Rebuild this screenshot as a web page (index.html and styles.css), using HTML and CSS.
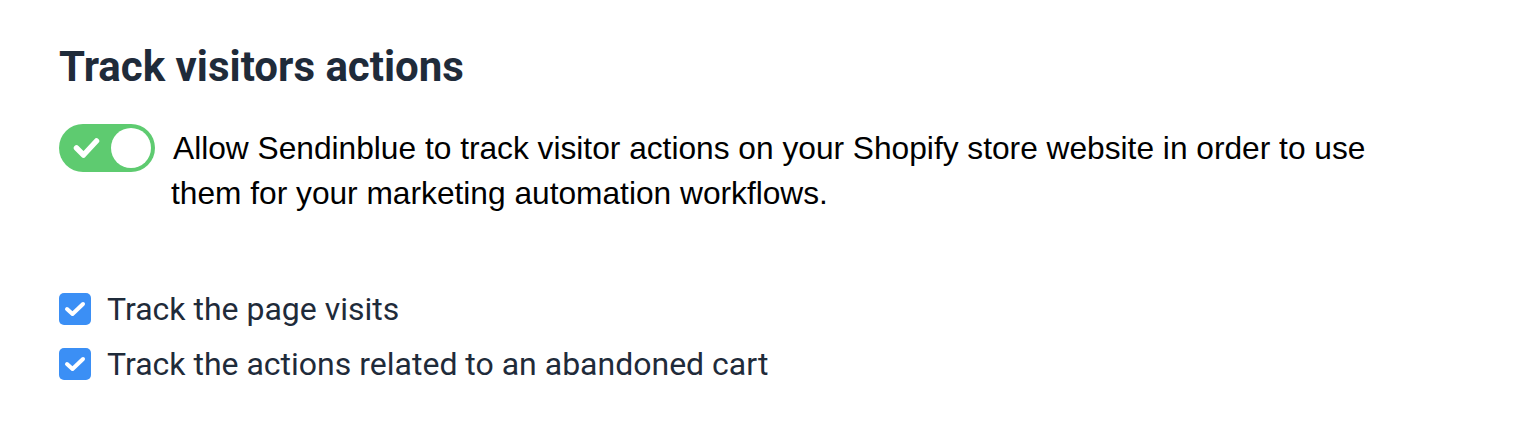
FILE: index.html
```html
<!doctype html>
<html>
<head>
<meta charset="utf-8">
<title>Track visitors actions</title>
<link rel="stylesheet" href="styles.css">
</head>
<body>
<div class="panel">
	<h2 class="title">Track visitors actions</h2>
	<div class="toggle-row">
		<span class="toggle">
			<svg class="toggle-check" width="27" height="22" viewBox="0 0 27 22"><path d="M3.5 11 L10.5 18 L23.5 4" fill="none" stroke="#fff" stroke-width="5.5" stroke-linecap="round" stroke-linejoin="round"/></svg>
			<span class="knob"></span>
		</span>
		<p class="toggle-text">Allow Sendinblue to track visitor actions on your Shopify store website in order to use them for your marketing automation workflows.</p>
	</div>
	<ul class="checks">
		<li><span class="box"><svg width="22" height="18" viewBox="0 0 22 18"><path d="M3 9 L8.5 14 L19 4" fill="none" stroke="#fff" stroke-width="4" stroke-linecap="round" stroke-linejoin="round"/></svg></span>Track the page visits</li>
		<li><span class="box"><svg width="22" height="18" viewBox="0 0 22 18"><path d="M3 9 L8.5 14 L19 4" fill="none" stroke="#fff" stroke-width="4" stroke-linecap="round" stroke-linejoin="round"/></svg></span>Track the actions related to an abandoned cart</li>
	</ul>
</div>
</body>
</html>
```

FILE: styles.css
```css
*{ margin:0; padding:0; list-style:none;}
body{ background:#fff; font-family:Roboto, "Liberation Sans", sans-serif;}
.panel{ padding:42px 59px 0;}
.title{ font-size:42px; font-weight:700; color:#1f2b3a; line-height:50px;}
.toggle-row{ display:flex; align-items:flex-start; margin-top:32px;}
.toggle{ flex:none; width:96px; height:48px; border-radius:24px; background:#5ecb70; display:flex; align-items:center; justify-content:space-between; padding:0 4px 0 14px; box-sizing:border-box;}
.knob{ width:40px; height:40px; border-radius:50%; background:#fff;}
.toggle-text{ font-family:"Liberation Sans", Arial, sans-serif; font-size:31.7px; line-height:45px; color:#000; margin:2px 0 0 16px; width:1220px; text-indent:2px;}
.checks{ margin-top:65px;}
.checks li{ display:flex; align-items:center; font-size:32px; color:#1f2b3a; height:55px;}
.box{ flex:none; width:32px; height:32px; border-radius:5px; background:#3b8ff5; display:flex; align-items:center; justify-content:center; margin-right:16px;}
```
